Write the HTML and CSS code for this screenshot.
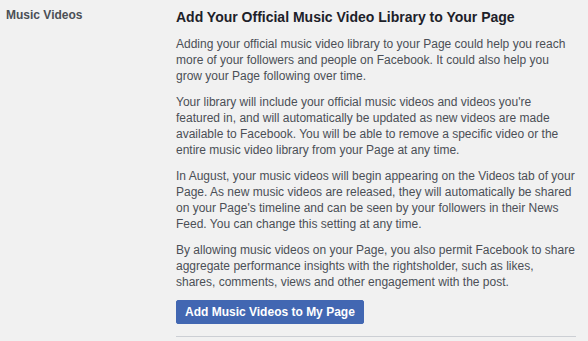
FILE: index.html
```html
<!DOCTYPE html>
<html>
<head>
<meta charset="utf-8">
<link rel="stylesheet" href="styles.css">
</head>
<body>
<div class="row">
  <div class="label">Music Videos</div>
  <div class="content">
    <h2 class="title">Add Your Official Music Video Library to Your Page</h2>
    <p class="para">Adding your official music video library to your Page could help you reach more of your followers and people on Facebook. It could also help you grow your Page following over time.</p>
    <p class="para">Your library will include your official music videos and videos you're featured in, and will automatically be updated as new videos are made available to Facebook. You will be able to remove a specific video or the entire music video library from your Page at any time.</p>
    <p class="para">In August, your music videos will begin appearing on the Videos tab of your Page. As new music videos are released, they will automatically be shared on your Page's timeline and can be seen by your followers in their News Feed. You can change this setting at any time.</p>
    <p class="para">By allowing music videos on your Page, you also permit Facebook to share aggregate performance insights with the rightsholder, such as likes, shares, comments, views and other engagement with the post.</p>
    <button class="btn">Add Music Videos to My Page</button>
    <div class="divider"></div>
  </div>
</div>
</body>
</html>
```
FILE: styles.css
```css
html, body {
  margin: 0;
  padding: 0;
  background: #f1f1f1;
}
body {
  font-family: "Liberation Sans", Arial, Helvetica, sans-serif;
  font-size: 12px;
  line-height: 16px;
  color: #4b4f56;
}
.row {
  display: flex;
  padding: 7px 12px 0 6px;
}
.label {
  width: 170px;
  flex: none;
  font-weight: bold;
  color: #4b4f56;
}
.content {
  flex: 1;
  padding-top: 1px;
}
.title {
  margin: 0 0 10px;
  font-size: 14px;
  line-height: 18px;
  font-weight: bold;
  color: #1d2129;
}
.para {
  margin: 0 0 10px;
}
.btn {
  display: block;
  height: 24px;
  margin: 0;
  padding: 0 8px;
  border: 1px solid #4267b2;
  border-radius: 2px;
  background: #4267b2;
  color: #fff;
  font-family: inherit;
  font-size: 12px;
  font-weight: bold;
  line-height: 22px;
}
.divider {
  margin-top: 12px;
  height: 1px;
  background: #cccfd4;
}
```
